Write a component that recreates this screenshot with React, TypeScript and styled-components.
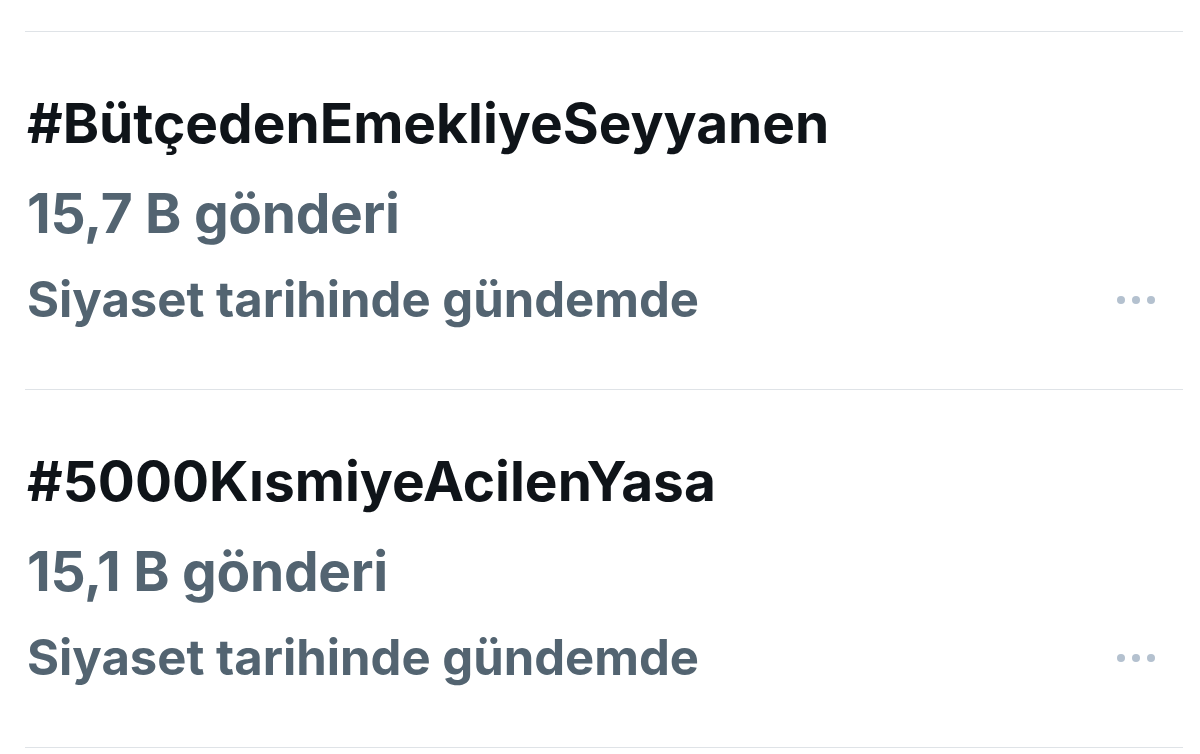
import React from 'react';
import styled, {createGlobalStyle} from 'styled-components';

const GlobalStyle = createGlobalStyle`
  html, body {
    margin: 0;
    padding: 0;
    background: #fff;
  }
  body {
    font-family: Inter, "Noto Sans", "Liberation Sans", sans-serif;
    -webkit-font-smoothing: antialiased;
  }
`;

const List = styled.ul`
  list-style: none;
  margin: 0;
  padding: 31px 17px 0 25px;
`;

const TrendItem = styled.li`
  border-top: 1px solid #dfe3e7;
  padding: 59px 0 57px 2px;
  display: flex;
  flex-direction: column;

  &:last-child {
    border-bottom: 1px solid #dfe3e7;
  }
`;

const Name = styled.div`
  font-size: 55px;
  line-height: 64px;
  font-weight: 700;
  color: #0f1419;
`;

const Count = styled.div`
  margin-top: 26px;
  font-size: 55px;
  line-height: 64px;
  font-weight: 700;
  color: #536471;
  letter-spacing: -0.3px;
`;

const ContextRow = styled.div`
  margin-top: 23px;
  display: flex;
  align-items: center;
  justify-content: space-between;
`;

const Context = styled.span`
  font-size: 49px;
  line-height: 64px;
  font-weight: 700;
  color: #536471;
`;

const MoreButton = styled.button`
  border: 0;
  background: none;
  padding: 0;
  margin-right: 28px;
  display: flex;
  gap: 7px;
  cursor: pointer;
`;

const Dot = styled.span`
  width: 8px;
  height: 8px;
  border-radius: 50%;
  background: #b4c1cf;
`;

type Trend = {
    name: string;
    posts: string;
    context: string;
};

const trends: Trend[] = [
    {name: '#BütçedenEmekliyeSeyyanen', posts: '15,7 B gönderi', context: 'Siyaset tarihinde gündemde'},
    {name: '#5000KısmiyeAcilenYasa', posts: '15,1 B gönderi', context: 'Siyaset tarihinde gündemde'},
];

const App: React.FC = () => {
    return (
        <>
            <GlobalStyle/>
            <List>
                {trends.map((t, index) => (
                    <TrendItem key={index}>
                        <Name>{t.name}</Name>
                        <Count>{t.posts}</Count>
                        <ContextRow>
                            <Context>{t.context}</Context>
                            <MoreButton aria-label="Diğer">
                                <Dot/><Dot/><Dot/>
                            </MoreButton>
                        </ContextRow>
                    </TrendItem>
                ))}
            </List>
        </>
    );
};

export default App;
